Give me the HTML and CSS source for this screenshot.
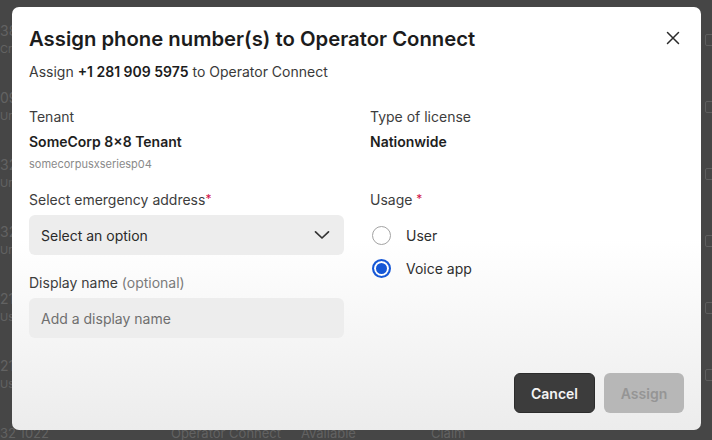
FILE: index.html
```html
<!DOCTYPE html>
<html lang="en">
<head>
  <meta charset="UTF-8" />
  <meta name="viewport" content="width=device-width, initial-scale=1.0"/>
  <title>Assign phone number(s)</title>
  <link rel="stylesheet" href="styles.css">
</head>
<body>
  <!-- page behind the dialog, dimmed by the overlay -->
  <div class="numbers-table">
    <div class="row"><div class="cell num">38<small>Cr</small></div><div class="check"></div></div>
    <div class="row"><div class="cell num">09<small>Ur</small></div><div class="check"></div></div>
    <div class="row"><div class="cell num">32<small>Ur</small></div><div class="check"></div></div>
    <div class="row"><div class="cell num">32<small>Ur</small></div><div class="check"></div></div>
    <div class="row"><div class="cell num">21<small>Us</small></div><div class="check"></div></div>
    <div class="row"><div class="cell num">21<small>Us</small></div><div class="check"></div></div>
    <div class="row last"><div class="cell num">32 1022</div><div class="cell">Operator Connect</div><div class="cell">Available</div><div class="cell">Claim</div></div>
  </div>

  <div class="modal">
    <div class="modal-header">
      <h2>Assign phone number(s) to Operator Connect</h2>
      <button class="close-btn" aria-label="Close">
        <svg width="14" height="14" viewBox="0 0 14 14"><path d="M1.5 1.5 L12.5 12.5 M12.5 1.5 L1.5 12.5" stroke="#2b2b2b" stroke-width="1.5" fill="none" stroke-linecap="round"/></svg>
      </button>
    </div>
    <p class="subtitle">Assign <strong>+1 281 909 5975</strong> to Operator Connect</p>

    <div class="form-grid">
      <div class="col">
        <div class="label">Tenant</div>
        <div class="value">SomeCorp 8×8 Tenant</div>
        <div class="hint">somecorpusxseriesp04</div>

        <div class="label field-label">Select emergency address<span class="req">*</span></div>
        <div class="select-box">
          <span>Select an option</span>
          <svg width="16" height="10" viewBox="0 0 16 10"><path d="M1.5 1.8 L8 8 L14.5 1.8" stroke="#333" stroke-width="1.7" fill="none" stroke-linecap="round" stroke-linejoin="round"/></svg>
        </div>

        <div class="label field-label second">Display name <span class="muted">(optional)</span></div>
        <div class="text-input">Add a display name</div>
      </div>

      <div class="col">
        <div class="label">Type of license</div>
        <div class="value">Nationwide</div>

        <div class="label field-label usage">Usage <span class="req">*</span></div>
        <div class="radio-group">
          <div class="radio-row"><span class="radio"></span>User</div>
          <div class="radio-row"><span class="radio checked"></span>Voice app</div>
        </div>
      </div>
    </div>

    <div class="modal-footer">
      <button class="btn cancel-btn">Cancel</button>
      <button class="btn assign-btn">Assign</button>
    </div>
  </div>
</body>
</html>
```
FILE: styles.css
```css
* {
  box-sizing: border-box;
}

body {
  margin: 0;
  padding: 0;
  width: 712px;
  height: 440px;
  overflow: hidden;
  font-family: Inter, 'Liberation Sans', sans-serif;
  background: #464646;
}

/* dimmed table behind the dialog */
.numbers-table {
  height: 440px;
  overflow: hidden;
  padding-top: 22px;
}

.row {
  display: flex;
  height: 67px;
  color: #626262;
  font-size: 14px;
  position: relative;
}

.row.last {
  height: 18px;
  font-size: 13px;
  line-height: 18px;
}

.cell {
  width: 130px;
  white-space: nowrap;
}

.cell.num {
  width: 12px;
  overflow: hidden;
  margin-right: 160px;
}

.row.last .cell.num {
  width: auto;
  margin-right: 122px;
}

.cell small {
  display: block;
  font-size: 11px;
  margin-top: 3px;
}

.check {
  position: absolute;
  left: 705px;
  top: 12px;
  width: 10px;
  height: 12px;
  border: 1.5px solid #5e5e5e;
  border-radius: 2px;
}

/* dialog */
.modal {
  position: fixed;
  left: 12px;
  top: 7px;
  width: 689px;
  height: 423px;
  padding: 17px;
  border-radius: 7px;
  background: linear-gradient(180deg, #ffffff 0%, #ffffff 55%, #ececec 100%);
  display: flex;
  flex-direction: column;
  color: #2a2a2a;
}

.modal-header {
  display: flex;
  justify-content: space-between;
  align-items: center;
  height: 28px;
}

h2 {
  margin: 0;
  font-size: 20.3px;
  font-weight: 600;
  color: #1c1c1c;
}

.close-btn {
  border: none;
  background: none;
  padding: 0;
  margin-right: 4px;
  width: 14px;
  height: 14px;
  display: flex;
}

.subtitle {
  margin: 10px 0 0;
  font-size: 14px;
  line-height: 20px;
  color: #3a3a3a;
}

.subtitle strong {
  font-weight: 600;
  color: #1c1c1c;
}

.form-grid {
  display: grid;
  grid-template-columns: 315px 1fr;
  column-gap: 26px;
  margin-top: 25px;
}

.label {
  font-size: 14px;
  line-height: 20px;
  color: #3d3d3d;
}

.value {
  margin-top: 5px;
  font-size: 14px;
  line-height: 20px;
  font-weight: 600;
  color: #1e1e1e;
}

.hint {
  margin-top: 5px;
  font-size: 11px;
  line-height: 14px;
  color: #8a8a8a;
}

.field-label {
  margin-top: 18px;
}

.field-label.second {
  margin-top: 18px;
}

.field-label.usage {
  margin-top: 37px;
}

.req {
  color: #d2124a;
  font-size: 12px;
  vertical-align: 2px;
}

.muted {
  color: #7a7a7a;
}

.select-box,
.text-input {
  margin-top: 5px;
  height: 40px;
  border-radius: 6px;
  background: #ededed;
  padding: 0 14px 0 12px;
  display: flex;
  align-items: center;
  font-size: 14px;
}

.select-box {
  justify-content: space-between;
  color: #2a2a2a;
}

.text-input {
  color: #6f6f6f;
}

.radio-group {
  margin-top: 13px;
  display: flex;
  flex-direction: column;
  gap: 9px;
}

.radio-row {
  display: flex;
  align-items: center;
  height: 24px;
  font-size: 14px;
  color: #2e2e2e;
  margin-left: 2px;
}

.radio {
  width: 19px;
  height: 19px;
  border-radius: 50%;
  border: 1.5px solid #a3a3a3;
  margin-right: 15px;
  background: #fff;
}

.radio.checked {
  border: 2px solid #1557d6;
  box-shadow: inset 0 0 0 2px #fff, inset 0 0 0 8px #1557d6;
}

.modal-footer {
  margin-top: auto;
  display: flex;
  justify-content: flex-end;
  gap: 9px;
}

.btn {
  height: 40px;
  width: 81px;
  border: none;
  border-radius: 6px;
  font-family: inherit;
  font-size: 14px;
  font-weight: 600;
}

.cancel-btn {
  background: #3c3c3c;
  color: #f4f4f4;
  border: 1px solid #2c2c2c;
}

.assign-btn {
  width: 80px;
  background: #b7b7b7;
  color: #959595;
}
```
